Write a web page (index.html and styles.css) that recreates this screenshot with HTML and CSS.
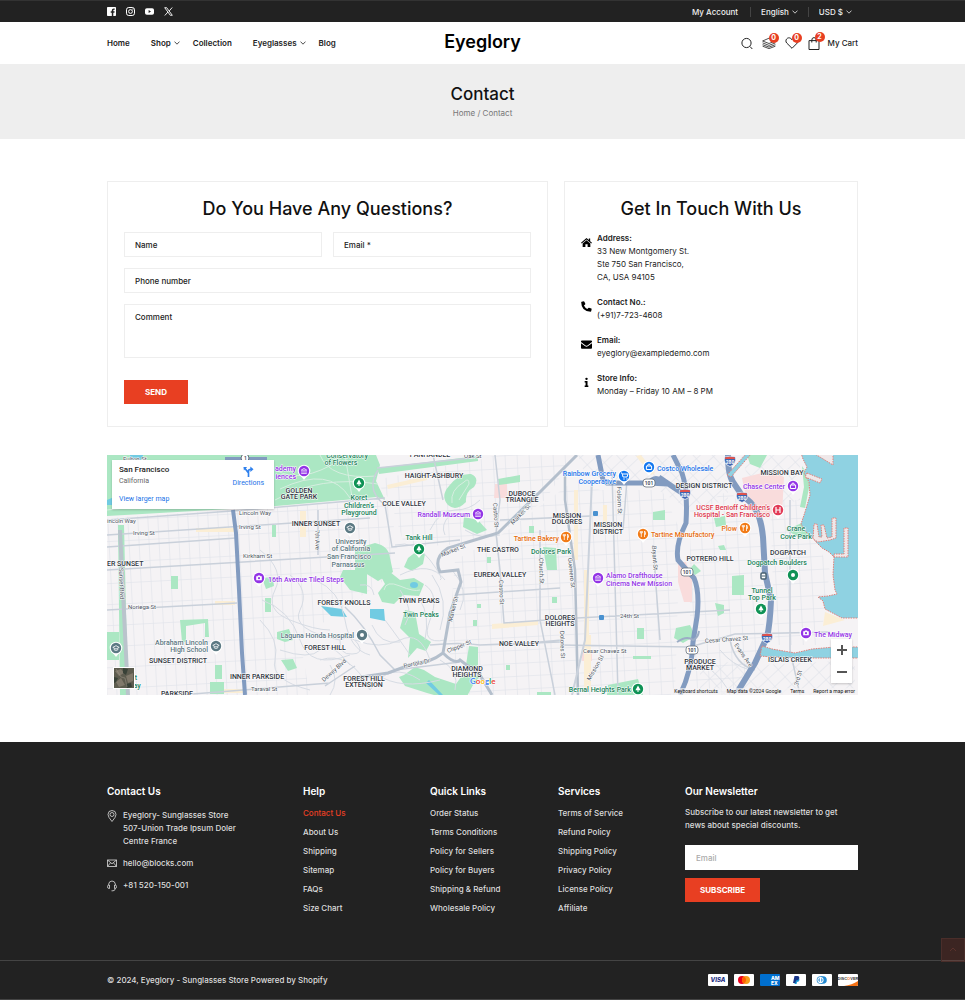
FILE: index.html
```html
<!DOCTYPE html>
<html lang="en">
<head>
<meta charset="utf-8">
<meta name="viewport" content="width=device-width, initial-scale=1">
<title>Contact - Eyeglory</title>
<link rel="stylesheet" href="styles.css">
</head>
<body>
<svg class="defs" aria-hidden="true">
  <symbol id="chev" viewBox="0 0 6 4"><path d="M.5 .6L3 3.2 5.5 .6" fill="none" stroke="currentColor" stroke-width=".8"/></symbol>
</svg>

<div class="topbar">
  <div class="container topbar-row">
    <div class="social">
      <a href="#" aria-label="Facebook"><svg viewBox="0 0 9 9"><path fill="#fff" d="M.8 0h7.4q.8 0 .8.800v7.400q0 .8-.8.8H6.300V5.700h1.100l.2-1.400H6.300v-.8q0-.7.7-.7h.7V1.500h-1q-1.900 0-1.900 1.800v1H3.700v1.400h1.100V9h-4Q0 9 0 8.200V.8Q0 0 .8 0z"/></svg></a>
      <a href="#" aria-label="Instagram"><svg viewBox="0 0 9 9"><g fill="none" stroke="#fff"><rect x=".5" y=".5" width="8" height="8" rx="2.300"/><circle cx="4.500" cy="4.500" r="1.900"/></g><circle cx="6.900" cy="2.100" r=".6" fill="#fff"/></svg></a>
      <a href="#" aria-label="YouTube"><svg viewBox="0 0 9 9"><rect y="1.300" width="9" height="6.400" rx="1.800" fill="#fff"/><path d="M3.600 3.100v2.800L6 4.500z" fill="#222"/></svg></a>
      <a href="#" aria-label="X"><svg viewBox="0 0 9 9"><path d="M.7 .7h2l5.600 7.600h-2z" fill="none" stroke="#fff" stroke-width=".9"/><path d="M8.200 .5L5.200 4M.8 8.500L4 4.900" stroke="#fff" stroke-width=".9"/></svg></a>
    </div>
    <div class="account">
      <a href="#">My Account</a>
      <span class="picker"><select aria-label="Language"><option>English</option></select><svg class="chev"><use href="#chev"/></svg></span>
      <span class="picker"><select aria-label="Currency"><option>USD $</option></select><svg class="chev"><use href="#chev"/></svg></span>
    </div>
  </div>
</div>

<header class="header">
  <div class="container header-row">
    <nav class="nav">
      <a href="#">Home</a>
      <a href="#" class="has-menu">Shop<svg class="chev"><use href="#chev"/></svg></a>
      <a href="#">Collection</a>
      <a href="#" class="has-menu">Eyeglasses<svg class="chev"><use href="#chev"/></svg></a>
      <a href="#">Blog</a>
    </nav>
    <a class="logo" href="#">Eyeglory</a>
    <div class="tools">
      <button aria-label="Search"><svg viewBox="0 0 12 12"><circle cx="5.500" cy="5.500" r="4.600"/><path d="M9 9l2.300 2.500"/></svg></button>
      <a href="#" class="tool" aria-label="Compare"><svg class="wide" viewBox="0 0 14 12"><g stroke-width=".8"><path d="M.6 4L7 1.200 13.400 4 7 6.500z"/><path d="M.6 5.900L7 8.400l6.400-2.500M.6 7.700L7 10.100l6.400-2.400M.6 9.200L7 11.600l6.400-2.400"/></g></svg><span class="badge">0</span></a>
      <a href="#" class="tool" aria-label="Wishlist"><svg class="wide" viewBox="0 0 14 12"><path d="M7 11.300L1.700 6C-.6 3.400 2.600-.7 5.700 1.400L7 2.700 8.300 1.400c3.100-2.100 6.300 2 4 4.600z"/></svg><span class="badge">0</span></a>
      <a href="#" class="tool cart"><svg viewBox="0 0 12 13"><path d="M1 3.600h10v8.900H1zM3.800 5.500V3.200q0-2.600 2.200-2.600t2.200 2.600v2.300"/></svg><span class="badge">2</span><span>My Cart</span></a>
    </div>
  </div>
</header>

<section class="banner">
  <h1>Contact</h1>
  <p><a href="#">Home</a> / Contact</p>
</section>

<main class="container main">
  <div class="panels">
    <section class="panel">
      <h2>Do You Have Any Questions?</h2>
      <form class="form">
        <input type="text" placeholder="Name" aria-label="Name">
        <input type="email" placeholder="Email *" aria-label="Email">
        <input class="full" type="tel" placeholder="Phone number" aria-label="Phone number">
        <textarea class="full" placeholder="Comment" aria-label="Comment"></textarea>
        <button class="btn" type="button">SEND</button>
      </form>
    </section>
    <section class="panel">
      <h2>Get In Touch With Us</h2>
      <ul class="touch">
        <li><svg viewBox="0 0 12 12"><path d="M6 1L0 6.200l.8.900L6 2.700l5.200 4.400.8-.9-2-1.700V1.500H8.500v1.700zM6 3.600L1.800 7.200V11h3V8h2.400v3h3V7.200z"/></svg><div><b>Address:</b><p>33 New Montgomery St.<br>Ste 750 San Francisco,<br>CA, USA 94105</p></div></li>
        <li><svg viewBox="0 0 12 12"><path d="M.7.800L3 .3q.5 0 .7.400l1 2.400q.1.400-.2.800L3.200 5q1.200 2.500 3.700 3.800L8 7.500q.4-.4.800-.2l2.500 1q.4.200.3.700l-.5 2.200q-.1.500-.6.500Q.300 11.300.200 1.400.2.900.7.800z"/></svg><div><b>Contact No.:</b><p>(+91)7-723-4608</p></div></li>
        <li><svg viewBox="0 0 12 12"><path d="M1 1.500h10q1 0 1 1v.8L7 7Q6 7.700 5 7L0 3.300v-.8q0-1 1-1zM0 4.600L4.600 8Q6 8.900 7.400 8L12 4.600v4.900q0 1-1 1H1q-1 0-1-1z"/></svg><div><b>Email:</b><p>eyeglory@exampledemo.com</p></div></li>
        <li><svg viewBox="0 0 12 12"><circle cx="6" cy="2" r="1.300"/><path d="M4 4.300h3.100v5H8V11H4V9.300h1V6H4z"/></svg><div><b>Store Info:</b><p>Monday – Friday 10 AM – 8 PM</p></div></li>
      </ul>
    </section>
  </div>

  <div class="map">
    <svg class="map-art" viewBox="107 455 751 240" preserveAspectRatio="xMidYMid slice" role="img" aria-label="Map of San Francisco">
      <defs>
        <pattern id="gw" width="10" height="21" patternUnits="userSpaceOnUse" patternTransform="rotate(-3)"><path d="M0 0H10M0 0V21" stroke="#dce0e7" fill="none"/></pattern>
        <pattern id="ge" width="12" height="13" patternUnits="userSpaceOnUse" patternTransform="rotate(-3)"><path d="M0 0H12M0 0V13" stroke="#dce0e7" fill="none"/></pattern>
        <pattern id="gs" width="14" height="10" patternUnits="userSpaceOnUse" patternTransform="rotate(-43)"><path d="M0 0H14M0 0V10" stroke="#dce0e7" fill="none"/></pattern>
        <g id="pin"><path d="M0 9L-3.500 4.500h7z" fill="#fff"/><circle r="6.300" fill="#fff"/><circle r="5.200" fill="currentColor"/></g>
        <g id="tree"><use href="#pin"/><path d="M0-3.500L2.600 1.300H-2.600zM-.5 1h1v2h-1z" fill="#fff"/></g>
        <g id="fork"><use href="#pin"/><path d="M-1.700-3v6M-2.700-3v2h2v-2M1.500 3v-6q1.500 1 1 3.400h-1" stroke="#fff" stroke-width=".8" fill="none"/></g>
        <g id="bag"><use href="#pin"/><path d="M-2.600-1h5.200v3.500h-5.200zM-1.400-1q0-2 1.400-2t1.400 2" stroke="#fff" fill="none"/></g>
        <g id="museum"><use href="#pin"/><path d="M-2.800-.8L0-2.600 2.800-.8zM-2 0v2M0 0v2M2 0v2M-2.800 2.500h5.600" stroke="#fff" stroke-width=".7" fill="none"/></g>
        <g id="camera"><use href="#pin"/><path d="M-2.800-1.800h1.300l.5-.8h2l.5.800h1.300v4h-5.600z" fill="#fff"/><circle cy=".2" r="1.100" fill="currentColor"/></g>
        <g id="cap"><use href="#pin"/><path d="M-3.200-.6L0-2.300 3.200-.6 0 1zM-1.800.6v1.300Q0 3 1.800 1.900V.6" stroke="#fff" stroke-width=".8" fill="none"/></g>
        <g id="s101"><rect x="-6" y="-4" width="12" height="8" rx="3" fill="#fff" stroke="#68717c" stroke-width=".8"/><text y="2" text-anchor="middle" class="tiny">101</text></g>
        <g id="s280"><path d="M-5.500-4q5.500-1.500 11 0Q7 3 0 5.500-7 3-5.500-4z" fill="#3f67b1" stroke="#fff" stroke-width=".7"/><path d="M-5-3.500q5-1.300 10 0v1.500H-5z" fill="#e0524c"/><text y="3" text-anchor="middle" class="tiny wh">280</text></g>
      </defs>
      <rect x="107" y="455" width="751" height="240" fill="#f5f3f5"/>
      <path d="M107 518L390 500 400 570 340 610 300 640 310 695H107z" fill="url(#gw)"/>
      <path d="M375 480L500 455H575L545 500 500 533 450 545 405 547 390 500zM455 560L500 536 575 480 600 490 662 490 680 530 675 695H470L448 650zM690 510L730 490 762 540 764 640 740 695H690z M770 500H800L815 540 830 570 820 645H775z" fill="url(#ge)"/>
      <path d="M578 455H728V500L690 510 650 485 585 475zM740 455H800V500L760 510zM700 660L760 665 855 660V695H700z" fill="url(#gs)"/>
      <g fill="#f9dcdc"><path d="M495 484h12v14h-13zM742 478l28-7 14 6-2 38-33-4zM678 562h8l6 18v22h-8l-6-20zM582 653h10v8h-10z"/></g>
      <g fill="#fbeed5"><path d="M196 528h38v4h-38zM300 511h6v26h-6zM215 601h20v4h-20zM224 689h20v4h-20zM387 485l40-9v4l-39 9zM492 624l46-3v4l-46 4zM584 570h5v120h-5zM586 635h5v55h-5zM603 505h4v25h-4zM574 490h4v70h-4zM641 455l14 18-4 2-15-19zM825 612l20 8-22 6z"/></g>

      <g fill="#abe7c3">
        <path d="M107 455H376l4 10-4 16 9 19-8-3-112 10-158 9z"/>
        <path d="M377 468L478 456v5l-99 13z"/>
        <path d="M448 505q-8-9 1-19 10-13 22-12 9 4 3 13-9 5-8 15-10 10-18 3z"/>
        <path d="M464 517l14 3 9 10-10 4-14-7zM408 558l9-7 8 3-2 10-11 7-8-4zM355 549l20-6q14 3 15 15l3 14-15 9-16-10h-7zM343 570h24v24l-17-4-10-13z"/>
        <path d="M378 571l12 1 10 8 14-2 10 6-5 12-16-1-9 9-12-2-4-9 7-9zM405 610l10 2 4 22 12 8-5 9-9-3-9 10 2-20-10-10z"/>
        <path d="M415 667l9 3 11 7 21 7 5-7 20-2-8 10-8 15-24-3-14-4-22-7-6-9 5-2zM469 646l9 1v18l-7 5-5-5zM543 547l13 1 1 22h-10zM498 479l22-4v7l-21 3z"/>
        <path d="M118 525h6l4 170h-8zM180 620l28-1 1 18h-4v-14l-19 3v16h-4zM107 632h12v28h-12zM210 682h14v12h-14zM215 665h7v14h-7zM171 576h7v13h-7zM262 578l11-1 1 9-8 3zM265 598h6v14h-6zM277 632l12-3 4 11-8 2-8-3zM281 660l12-1 4 9-9 3zM272 525h4v12h-4z"/>
        <path d="M653 512l12-2v10h-12zM714 518l11-2 1 9-10 2zM732 576l12-1v20h-12zM715 603l9 2v8l-6 3zM676 628l14-3 5 11-12 7-9-5zM633 656h18v3h-18zM608 685l30-6 5 16h-36zM637 628h7v11h-7zM802 466q8 10 7 22l-4 20-5-1 4-20zM786 530l18-8 10 14-14 2zM689 570l5-6 7 7-6 4zM718 546l6-1 2 5h-6zM552 597h5v6h-5zM529 526h5v7h-5zM473 620h4v6h-4zM477 604h4v4h-4zM487 557h4v6h-4zM506 665h4v5h-4zM537 692h14v3h-14zM747 455h20l-7 13-10-4z"/>
      </g>
      <g fill="#71cbe2"><path d="M321 606l21 3 5 8-16-1zM370 609h14l1 12-15-3z"/><ellipse cx="414" cy="585" rx="4" ry="3"/><path d="M130 455h13v5h-13zM107 500l7-3 8 2-6 6h-9zM429 680l14 15h-4l-13-12z"/></g>

      <!-- Park paths -->
      <g fill="none" stroke="#d6eee0">
        <path d="M275 500Q320 475 378 484M276 470Q300 485 340 460M320 455Q330 480 376 476M280 489Q330 465 350 498M345 455L352 497M107 510Q180 500 270 504M452 503Q450 490 464 482 469 477 469 484L459 500M384 590Q386 580 400 586T420 590"/>
      </g>
      <!-- Hillside streets -->
      <g fill="none" stroke="#d7dce4">
        <path d="M260 550Q285 570 275 590T290 620 330 630M262 600Q290 610 300 640T350 655M290 575Q310 590 300 610T340 640M315 580Q340 590 345 620T370 655M280 650Q310 660 320 650T350 665M260 620Q280 640 275 660T310 690M320 660Q350 650 370 690M330 665Q340 680 330 695M355 640Q380 650 400 640T430 660"/>
        <path d="M372 625Q380 645 400 642M385 620Q400 640 410 655M400 590Q415 610 405 625M425 585Q440 595 430 620T445 640M432 575Q450 600 440 630M420 600Q430 615 425 640M452 570Q470 590 460 610M395 545Q415 540 430 560T440 580M400 575Q430 560 445 580M378 675Q400 690 440 680M370 690Q390 660 420 680M440 660Q460 670 455 690"/>
        <path d="M450 515Q440 525 445 535M465 530Q480 540 500 535M430 530Q440 510 455 510T480 500"/>
        <path d="M340 640q12-6 18 4t-6 10q-13 1-12-14zM360 585q12-2 14 10M705 665q20 15 25 30M720 650q12 15 30 20"/>
      </g>

      <!-- Arterial streets -->
      <g fill="none" stroke="#c9d0da" stroke-width="1.500">
        <path d="M107 520L232 511 385 498M107 535L370 518M107 547L236 538M107 570L395 553M107 610L237 603M180 695L330 683M355 666L325 686M495 455L500 500 496 533 500 570 504 623 560 619M505 645L562 640M430 645Q460 642 480 645L560 642M500 520L590 516M540 530V620L555 695M612 470L618 695M653 545L660 640M627 480L623 530M318 510V555M377 468L480 457M378 470Q365 490 385 505L392 547 460 540M433 455L443 500M558 619L730 610M455 595L560 588M790 500V650L800 695M345 607Q365 625 380 655L395 670 460 662M560 645L690 647 735 634 830 632M730 640Q735 665 755 670"/>
        <path d="M120 530L128 695" stroke="#bac4cc" stroke-width="4"/>
      </g>
      <g fill="none" stroke="#b4bfcc" stroke-width="3">
        <path d="M577 455L542 490 498 533 478 539 448 548Q433 558 440 572L458 570 461 582 450 613 443 653Q430 663 415 663L388 673 355 678M443 653Q455 665 460 660L480 675 492 695"/>
        <path d="M565 470V500L575 570 578 695" stroke-width="2.500"/>
        <path d="M592 480L585 640 572 695" stroke="#cbd2dc" stroke-width="2"/>
      </g>
      <g fill="none" stroke="#829bc0" stroke-width="5">
        <path d="M225 459H267M233 510L236 533 239 590 242 653 245 695" stroke-width="4"/>
        <path d="M598 455L603 480 607 483 648 483 668 484 683 494M659 477Q675 488 681 492M648 484Q656 473 664 484"/>
        <path d="M673 455L682 473Q688 490 686 523 675 545 678 560L694 578Q700 592 697 617L693 642Q692 670 680 695"/>
        <path d="M728 455Q728 475 733 482L743 497Q760 505 763 537L765 573 771 600Q770 625 767 637L755 663 738 691" stroke-width="6"/>
      </g>
      <path d="M677 642q10-7 16-2q5-2 6-9" fill="none" stroke="#9bacc5" stroke-width="2"/>

      <!-- Bay and Islais Creek -->
      <g fill="#8fd2e2" stroke="#e27f78" stroke-dasharray="1.500 1">
        <path d="M862 450H800L803 459 807 467 804 473 809 482 810 495 808 502 805 512 801 524 806 532 813 538 816 542 822 548 829 552 834 557 833 575 835 590 837 594 828 596 818 597 823 601 825 609 842 618H862z"/>
        <path d="M762 646L772 649 795 653 812 649 835 647H862V658H805L772 657 760 656z"/>
        <path d="M727 475L746 454h5L731 477z"/>
      </g>
      <g fill="#efe8e9" stroke="#e27f78" stroke-dasharray="1.500 1"><path d="M807 473l15 6-2 4-15-6zM815 454h18v11zM813 539L814 524h3l2 13h3l-1-12h3l3 13 5-1V518h4v20l-6 2-12 2zM834 557v-3h10V528h4v29z"/></g>

      <g class="road">
        <text x="123" y="461">Fulton St</text><text x="107" y="523">incoln Way</text><text x="239" y="515">Lincoln Way</text><text x="133" y="535">Irving St</text><text x="239" y="529">Irving St</text><text x="243" y="558">Kirkham St</text><text x="128" y="609">Noriega St</text><text x="251" y="691">Taraval St</text><text x="464" y="458">Oak St</text>
        <text transform="translate(119 568) rotate(88)">Sunset Blvd</text><text transform="translate(315 530) rotate(88)">7th Ave</text><text transform="translate(493 503) rotate(86)">Castro St</text><text transform="translate(499 580) rotate(88)">Castro St</text><text transform="translate(513 525) rotate(-46)">Market St</text><text transform="translate(442 557) rotate(-22)">Market St</text><text transform="translate(452 622) rotate(-76)">Market St</text><text transform="translate(539 558) rotate(88)">Church St</text><text transform="translate(568 558) rotate(84)">Guerrero St</text><text transform="translate(560 631) rotate(88)">Dolores St</text><text transform="translate(617 487) rotate(88)">Folsom St</text><text transform="translate(652 546) rotate(86)">Bryant St</text><text x="620" y="618">24th St</text><text x="583" y="653">Cesar Chavez St</text><text transform="translate(705 643) rotate(-4)">Cesar Chavez St</text><text transform="translate(590 681) rotate(-60)">Mission St</text><text transform="translate(734 645) rotate(55)">Evans Ave</text><text transform="translate(798 686) rotate(-75)">3rd St</text><text transform="translate(404 668) rotate(-12)">Portola Dr</text><text transform="translate(448 653) rotate(-22)">Clipper St</text><text transform="translate(324 682) rotate(-42)">Dewey Blvd</text>
      </g>
      <g class="area">
        <text x="299" y="493">GOLDEN</text><text x="299" y="499">GATE PARK</text><text x="316" y="526">INNER SUNSET</text><text x="107" y="566" class="start">ER SUNSET</text><text x="344" y="605">FOREST KNOLLS</text><text x="325" y="650">FOREST HILL</text><text x="178" y="663">SUNSET DISTRICT</text><text x="257" y="679">INNER PARKSIDE</text><text x="177" y="696">PARKSIDE</text><text x="364" y="681">FOREST HILL</text><text x="364" y="687">EXTENSION</text><text x="430" y="457">PANHANDLE</text><text x="434" y="478">HAIGHT-ASHBURY</text><text x="404" y="506">COLE VALLEY</text><text x="522" y="496">DUBOCE</text><text x="522" y="502">TRIANGLE</text><text x="567" y="518">MISSION</text><text x="567" y="524">DOLORES</text><text x="608" y="527">MISSION</text><text x="608" y="534">DISTRICT</text><text x="498" y="552">THE CASTRO</text><text x="500" y="577">EUREKA VALLEY</text><text x="419" y="603">TWIN PEAKS</text><text x="560" y="620">DOLORES</text><text x="560" y="626">HEIGHTS</text><text x="519" y="646">NOE VALLEY</text><text x="467" y="671">DIAMOND</text><text x="467" y="677">HEIGHTS</text><text x="704" y="488">DESIGN DISTRICT</text><text x="782" y="475">MISSION BAY</text><text x="788" y="555">DOGPATCH</text><text x="710" y="561">POTRERO HILL</text><text x="700" y="664">PRODUCE</text><text x="700" y="670">MARKET</text><text x="790" y="662">ISLAIS CREEK</text>
      </g>
      <g class="poi" fill="#20815a">
        <text x="347" y="458">Conservatory</text><text x="341" y="465">of Flowers</text><text x="359" y="500">Koret</text><text x="359" y="508">Children's</text><text x="359" y="515">Playground</text><text x="419" y="540">Tank Hill</text><text x="421" y="617">Twin Peaks</text><text x="551" y="554">Dolores Park</text><text x="796" y="531">Crane</text><text x="796" y="539">Cove Park</text><text x="777" y="565">Dogpatch Boulders</text><text x="762" y="593">Tunnel</text><text x="762" y="600">Top Park</text><text x="631" y="692" class="end">Bernal Heights Park</text><text x="136" y="680">t</text><text x="137" y="688">ay</text>
      </g>
      <g class="poi" fill="#9334e6">
        <text x="296" y="471" class="end">ademy</text><text x="296" y="479" class="end">iences</text><text x="470" y="517" class="end">Randall Museum</text><text x="268" y="582" class="start">16th Avenue Tiled Steps</text><text x="606" y="578" class="start">Alamo Drafthouse</text><text x="606" y="586" class="start">Cinema New Mission</text><text x="785" y="489" class="end">Chase Center</text><text x="814" y="637" class="start">The Midway</text>
      </g>
      <g class="poi" fill="#5c7681">
        <text x="351" y="544">University</text><text x="351" y="551">of California</text><text x="349" y="559">San Francisco</text><text x="348" y="567">Parnassus</text><text x="354" y="638" class="end">Laguna Honda Hospital</text><text x="208" y="645" class="end">Abraham Lincoln</text><text x="208" y="652" class="end">High School</text>
      </g>
      <g class="poi" fill="#e56a0c"><text x="559" y="541" class="end">Tartine Bakery</text><text x="651" y="537" class="start">Tartine Manufactory</text><text x="737" y="531" class="end">Plow</text></g>
      <g class="poi" fill="#1a73e8"><text x="616" y="476" class="end">Rainbow Grocery</text><text x="616" y="484" class="end">Cooperative</text><text x="657" y="471" class="start">Costco Wholesale</text></g>
      <g class="poi" fill="#dc3349"><text x="770" y="510" class="end">UCSF Benioff Children's</text><text x="770" y="517" class="end">Hospital - San Francisco</text></g>

      <g color="#0f9255"><use href="#tree" x="359" y="483"/><use href="#tree" x="419" y="549"/><use href="#tree" x="761" y="609"/><use href="#tree" x="638" y="689"/><use href="#pin" x="793" y="575"/><circle cx="793" cy="575" r="2" fill="#fff"/></g>
      <g color="#9334e6"><use href="#museum" x="304" y="471"/><use href="#museum" x="478" y="514"/><use href="#camera" x="259" y="578"/><use href="#museum" x="598" y="578"/><use href="#bag" x="793" y="486"/><use href="#camera" x="806" y="633"/></g>
      <g color="#5b7983"><use href="#cap" x="350" y="528"/><use href="#cap" x="116" y="648"/><use href="#cap" x="216" y="646"/><use href="#pin" x="362" y="635"/><circle cx="362" cy="635" r="2" fill="#fff"/></g>
      <g color="#f27b17"><use href="#fork" x="566" y="537"/><use href="#fork" x="643" y="534"/><use href="#fork" x="745" y="528"/></g>
      <g color="#1478f0"><use href="#bag" x="649" y="467"/><use href="#pin" x="624" y="476"/><path d="M621 473h1l1 4h4l1-3h-5" fill="none" stroke="#fff"/><circle cx="624" cy="479" r=".7" fill="#fff"/><circle cx="627" cy="479" r=".7" fill="#fff"/></g>
      <g color="#e23b57"><use href="#pin" x="778" y="510"/><path d="M776 507v6M780 507v6M776 510h4" stroke="#fff" stroke-width="1.200"/></g>
      <use href="#s101" x="649" y="483"/><use href="#s101" x="687" y="572"/><use href="#s101" x="692" y="650"/>
      <use href="#s280" x="685" y="494"/><use href="#s280" x="730" y="461"/><use href="#s280" x="742" y="497"/><use href="#s280" x="767" y="638"/>
      <circle cx="245" cy="458" r="4" fill="#fff" stroke="#68717c"/><text x="244" y="460" class="tiny">1</text>
      <g fill="#4991d0"><rect x="593" y="511" width="5" height="5" rx="1"/><rect x="599" y="615" width="5" height="5" rx="1"/></g><rect x="761" y="573" width="5" height="6" rx="1" fill="#fff" stroke="#476071" stroke-width="1.500"/><path d="M762 576h3" stroke="#476071"/>
      <text x="470" y="684" class="glogo"><tspan fill="#4285f4">G</tspan><tspan fill="#ea4335">o</tspan><tspan fill="#fbbc04">o</tspan><tspan fill="#4285f4">g</tspan><tspan fill="#34a853">l</tspan><tspan fill="#ea4335">e</tspan></text>
    </svg>

    <div class="place">
      <div><strong>San Francisco</strong><span>California</span><a href="#">View larger map</a></div>
      <a class="directions" href="#"><svg viewBox="0 0 12 12"><path d="M6 12V7.500L2 2.500M6 8V5.500Q6 3.500 9 3.500" fill="none" stroke="#2f80ed" stroke-width="1.800"/><path d="M8 .5L11.500 3.500 8 6.500zM.5 1h4L1 5z" fill="#2f80ed"/></svg>Directions</a>
    </div>
    <button class="satellite" aria-label="Show satellite imagery"><svg viewBox="0 0 20 20"><path fill="#5d5c4f" d="M0 0h20v20H0z"/><path fill="#80796b" d="M1 3l6-2 3 4-5 3zM12 8l7-3v8l-5 2zM2 14l5-4 4 7-6 2z"/><path fill="#384137" d="M0 9l4 1-2 4-2 1zM9 0l5 1-2 6-3-2zM12 16l5-1 1 4-5 1z"/><path stroke="#a0998b" stroke-width=".5" fill="none" d="M2 1l5 8 4 1 2 9"/></svg></button>
    <div class="zoom"><button aria-label="Zoom in"><svg viewBox="0 0 10 10"><path d="M0 5h10M5 0v10"/></svg></button><button aria-label="Zoom out"><svg viewBox="0 0 10 10"><path d="M0 5h10"/></svg></button></div>
    <div class="credits"><a href="#">Keyboard shortcuts</a><span>Map data ©2024 Google</span><a href="#">Terms</a><a href="#">Report a map error</a></div>
  </div>
</main>

<footer class="footer">
  <div class="container footer-cols">
    <section>
      <h3>Contact Us</h3>
      <ul class="reach">
        <li><svg viewBox="0 0 10 12"><path d="M5 11.500Q1 7 1 4.500a4 4 0 0 1 8 0Q9 7 5 11.500z"/><circle cx="5" cy="4.500" r="2"/></svg><span>Eyeglory- Sunglasses Store<br>507-Union Trade Ipsum Doler<br>Centre France</span></li>
        <li><svg viewBox="0 0 10 12"><path d="M.5 2h9v6.500h-9zM.5 2L5 5.800 9.500 2M.5 8.500l3-3.700M9.500 8.500l-3-3.700"/></svg><a href="#">hello@blocks.com</a></li>
        <li><svg viewBox="0 0 10 12"><path d="M1.500 5V4.500Q2 1 5 1t3.500 3.500V5M2.500 5v3.500H2Q.5 8.500.5 6.700T2 5zM7.500 5v3.500H8q1.500 0 1.500-1.800T8 5zM8.300 8.500Q8 10.800 6 10.800H4.500"/></svg><a href="#">+81 520-150-001</a></li>
      </ul>
    </section>
    <section>
      <h3>Help</h3>
      <ul class="links"><li><a class="active" href="#">Contact Us</a></li><li><a href="#">About Us</a></li><li><a href="#">Shipping</a></li><li><a href="#">Sitemap</a></li><li><a href="#">FAQs</a></li><li><a href="#">Size Chart</a></li></ul>
    </section>
    <section>
      <h3>Quick Links</h3>
      <ul class="links"><li><a href="#">Order Status</a></li><li><a href="#">Terms Conditions</a></li><li><a href="#">Policy for Sellers</a></li><li><a href="#">Policy for Buyers</a></li><li><a href="#">Shipping &amp; Refund</a></li><li><a href="#">Wholesale Policy</a></li></ul>
    </section>
    <section>
      <h3>Services</h3>
      <ul class="links"><li><a href="#">Terms of Service</a></li><li><a href="#">Refund Policy</a></li><li><a href="#">Shipping Policy</a></li><li><a href="#">Privacy Policy</a></li><li><a href="#">License Policy</a></li><li><a href="#">Affiliate</a></li></ul>
    </section>
    <section>
      <h3>Our Newsletter</h3>
      <form class="news">
        <p>Subscribe to our latest newsletter to get news about special discounts.</p>
        <input type="email" placeholder="Email" aria-label="Newsletter email">
        <button class="btn" type="button">SUBSCRIBE</button>
      </form>
    </section>
  </div>
  <button class="to-top" aria-label="Back to top"><svg viewBox="0 0 10 10"><path d="M2 6l3-3 3 3"/></svg></button>
  <div class="legal">
    <div class="container legal-row">
      <p>© 2024, Eyeglory - Sunglasses Store Powered by Shopify</p>
      <ul class="cards">
        <li><svg viewBox="0 0 20 12" role="img" aria-label="Visa"><rect width="20" height="12" rx="1" fill="#fff"/><text x="10" y="8" text-anchor="middle" class="visa">VISA</text></svg></li>
        <li><svg viewBox="0 0 20 12" role="img" aria-label="Mastercard"><rect width="20" height="12" rx="1" fill="#fff"/><circle cx="8" cy="6" r="4" fill="#eb001b"/><circle cx="12" cy="6" r="4" fill="#f79e1b"/><path d="M10 2.500a4 4 0 0 1 0 7 4 4 0 0 1 0-7z" fill="#ff5f00"/></svg></li>
        <li><svg viewBox="0 0 20 12" role="img" aria-label="American Express"><rect width="20" height="12" rx="1" fill="#006fcf"/><text x="11" y="6" class="amex">AM</text><text x="11" y="11" class="amex">EX</text></svg></li>
        <li><svg viewBox="0 0 20 12" role="img" aria-label="PayPal"><rect width="20" height="12" rx="1" fill="#fff"/><path d="M9.500 4H12q2 .3 1.400 2.300Q13 8 11 8l-.5 2H8.500z" fill="#179bd7"/><path d="M8.500 2h3q2.300.2 1.700 2.400Q12.800 6.500 10 6.500L9.400 9H7z" fill="#183587"/></svg></li>
        <li><svg viewBox="0 0 20 12" role="img" aria-label="Diners Club"><rect width="20" height="12" rx="1" fill="#fff"/><path d="M9 2.200h2a3.800 3.800 0 0 1 0 7.600H9z" fill="#2389d1"/><circle cx="8.500" cy="6" r="3.800" fill="#2389d1"/><circle cx="8.500" cy="6" r="3.100" fill="#fff"/><path d="M7.700 4a2.200 2.200 0 0 0 0 4zM9.300 4a2.200 2.200 0 0 1 0 4z" fill="#2389d1"/></svg></li>
        <li><svg viewBox="0 0 20 12" role="img" aria-label="Discover"><rect width="20" height="12" rx="1" fill="#fff"/><path d="M6 12Q14 11 20 7v4q0 1-1 1z" fill="#f47216"/><text x="10" y="6" text-anchor="middle" class="disc">DISC<tspan fill="#f47216">O</tspan>VER</text></svg></li>
      </ul>
    </div>
  </div>
</footer>
</body>
</html>
```
FILE: styles.css
```css
* { box-sizing: border-box; }
body { margin: 0; background: #fff; color: #222; font: 8px/14px Inter, "Open Sans", sans-serif; }
a { color: inherit; text-decoration: none; }
ul { list-style: none; margin: 0; padding: 0; }
h1, h2, h3, p { margin: 0; }
button, input, textarea, select { font: inherit; color: inherit; border: 0; border-radius: 0; background: none; padding: 0; margin: 0; }
button { cursor: pointer; }
svg { display: block; }
.defs { position: absolute; width: 0; height: 0; }
.container { width: 100%; max-width: 751px; margin: 0 auto; }
.chev { width: 6px; height: 4px; flex: none; }

.topbar { background: #222; color: #eee; border-top: 1px solid #333; }
.topbar-row { display: flex; justify-content: space-between; align-items: center; height: 21px; }
.social { display: flex; gap: 10px; }
.social svg { width: 9px; height: 9px; }
.account { display: flex; align-items: center; font-weight: 500; padding-right: 6px; }
.picker { display: flex; align-items: center; gap: 3px; margin-left: 12px; padding-left: 10px; border-left: 1px solid #444; line-height: 8px; }
.picker + .picker { margin-left: 10px; }
.picker select { appearance: none; field-sizing: content; line-height: 10px; }

.header-row { display: grid; grid-template-columns: 1fr auto 1fr; align-items: center; height: 42px; }
.nav { display: flex; gap: 21px; font-weight: 600; }
.has-menu { display: flex; align-items: center; gap: 3px; margin-right: -8px; }
.logo { color: #000; font-size: 18px; font-weight: 600; line-height: 24px; padding-bottom: 2px; }
.tools { display: flex; justify-content: flex-end; align-items: center; gap: 9px; }
.tools svg { width: 12px; height: 13px; fill: none; stroke: #222; }
.tools .wide { width: 14px; height: 12px; }
.tool { position: relative; }
.cart { display: flex; align-items: center; gap: 8px; font-weight: 500; }
.badge { position: absolute; left: 7px; top: -4px; width: 10px; height: 10px; border-radius: 50%; background: #e83f22; color: #fff; font-size: 7px; line-height: 10px; font-weight: 700; text-align: center; }

.banner { background: #eee; text-align: center; padding: 18px 0 19px; }
.banner h1 { font-size: 17px; line-height: 24px; font-weight: 500; color: #111; }
.banner p { color: #777; }

.main { padding: 42px 0 47px; }
.panels { display: grid; grid-template-columns: 3fr 2fr; gap: 16px; margin-bottom: 28px; }
.panel { border: 1px solid #eee; padding: 14px 16px 22px; }
.panel h2 { color: #111; font-size: 18px; font-weight: 500; line-height: 26px; text-align: center; margin-bottom: 10px; }
.form { display: grid; grid-template-columns: 1fr 1fr; gap: 11px; }
.form input, .form textarea { width: 100%; height: 25px; border: 1px solid #eee; padding: 0 10px; }
.form textarea { height: 54px; padding-top: 5px; resize: none; display: block; margin-bottom: 11px; }
.form ::placeholder { color: #222; opacity: 1; font-weight: 500; }
.full { grid-column: 1 / -1; }
.btn { background: #e83f22; color: #fff; font-weight: 700; height: 24px; justify-self: start; }
.form .btn { padding: 0 21px; }
.touch { display: grid; gap: 12px; line-height: 13px; }
.touch li { display: flex; gap: 5px; }
.touch svg { width: 11px; height: 11px; margin-top: 5px; flex: none; }
.touch b { display: block; font-weight: 600; }

.map { position: relative; height: 240px; overflow: hidden; font-family: Roboto, sans-serif; }
.map-art { width: 100%; height: 100%; }
.map-art text { paint-order: stroke; stroke: #fff; stroke-width: 1px; stroke-linejoin: round; }
.area text { font-size: 7px; font-weight: 500; fill: #303540; text-anchor: middle; }
.poi text { font-size: 7px; font-weight: 500; text-anchor: middle; }
.area .start, .poi .start { text-anchor: start; }
.poi .end { text-anchor: end; }
.road text { font-size: 6px; fill: #4c5360; }
.map-art .tiny { font-size: 5px; font-weight: 700; fill: #4c5360; stroke: none; }
.map-art .wh { fill: #fff; }
.glogo { font: 700 8px Lato, sans-serif; }
.place { position: absolute; left: 5px; top: 5px; width: 162px; height: 49px; padding: 4px 10px 0 7px; display: flex; justify-content: space-between; background: #fff; box-shadow: 0 1px 2px #0003; color: #222; }
.place strong, .place span { display: block; line-height: 11px; }
.place strong { font-weight: 500; font-size: 8px; }
.place span { color: #666; font-size: 7px; line-height: 12px; margin-bottom: 7px; }
.place a { color: #1a73e8; font-size: 7px; line-height: 10px; display: block; }
.directions svg { width: 11px; height: 11px; margin: 2px auto 1px; }
.satellite { position: absolute; left: 6px; bottom: 6px; width: 22px; height: 22px; border: 1px solid #fff; }
.zoom { position: absolute; right: 6px; bottom: 12px; width: 21px; background: #fff; box-shadow: 0 1px 2px #0003; }
.zoom button { display: block; padding: 6px; width: 100%; height: 22px; }
.zoom svg { width: 10px; height: 10px; stroke: #555; stroke-width: 2; }
.credits { position: absolute; right: 0; bottom: 0; display: flex; gap: 9px; padding: 0 3px; font-size: 5px; line-height: 7px; color: #111; background: #f5f3f5aa; }

.footer { position: relative; background: #222; color: #ddd; font-weight: 500; border-bottom: 1px solid #444; }
.footer-cols { display: grid; grid-template-columns: 196fr 127fr 128fr 127fr 173fr; padding: 41px 0 42px; }
.footer h3 { color: #fff; font-size: 10px; line-height: 16px; font-weight: 600; margin-bottom: 5px; }
.links { line-height: 19px; }
.links .active { color: #e83f22; }
.reach { display: grid; gap: 9px; padding-top: 5px; line-height: 13px; }
.reach li { display: flex; gap: 6px; }
.reach svg { width: 10px; height: 12px; flex: none; margin-top: 1px; fill: none; stroke: #ddd; stroke-width: .8; }
.news { display: grid; padding-top: 2px; line-height: 13px; }
.news input { background: #fff; color: #222; height: 25px; padding: 0 11px; width: 100%; margin: 13px 0 8px; }
.news ::placeholder { color: #aaa; opacity: 1; }
.news .btn { padding: 0 15px; }
.legal { border-top: 1px solid #444; }
.legal-row { display: flex; justify-content: space-between; align-items: center; height: 38px; }
.cards { display: flex; gap: 6px; }
.cards svg { width: 20px; height: 12px; }
.visa { font: italic 800 6px Inter, sans-serif; fill: #1a2d82; }
.amex { font: 800 5px Inter, sans-serif; fill: #fff; }
.disc { font: 700 4px "Liberation Sans", sans-serif; fill: #333; }
.to-top { position: absolute; right: 0; bottom: 37px; width: 24px; height: 24px; background: #e83f2222; border: 1px solid #4a2e2a; }
.to-top svg { width: 10px; height: 10px; margin: auto; fill: none; stroke: #5a322c; }
@media (max-width: 780px) {
  .container { padding-left: 16px; padding-right: 16px; }
  .panels { grid-template-columns: 1fr; }
  .footer-cols { grid-template-columns: 1fr 1fr; gap: 24px; }
}
```
